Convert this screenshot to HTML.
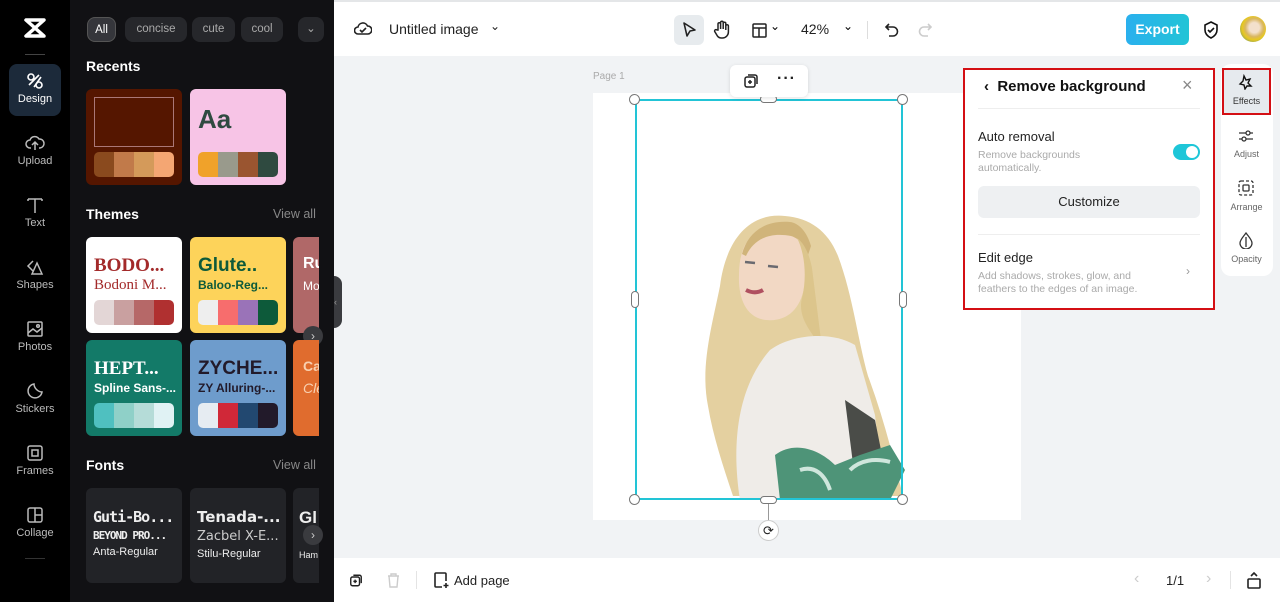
<!DOCTYPE html>
<html><head><meta charset="utf-8">
<style>
*{box-sizing:border-box;margin:0;padding:0}
body{width:1280px;height:602px;overflow:hidden;font-family:"Liberation Sans",sans-serif;background:#f1f3f5;position:relative}
.abs{position:absolute}
#rail{left:0;top:0;width:70px;height:602px;background:#000}
#panel{left:70px;top:0;width:264px;height:602px;background:#111114}
.ri{position:absolute;left:0;width:70px;text-align:center;color:#bbb;font-size:11px}
.ri svg{display:block;margin:0 auto 3px}
.chip{position:absolute;top:17px;height:25px;border-radius:8px;background:#26272b;color:#aaa;font-size:11.5px;line-height:25px;text-align:center}
.h{position:absolute;color:#fff;font-weight:bold;font-size:14px}
.va{position:absolute;color:#888;font-size:12.5px}
.card{position:absolute;width:96px;height:96px;border-radius:6px;overflow:hidden}
.pal{position:absolute;left:8px;right:8px;bottom:8px;height:25px;border-radius:5px;overflow:hidden;display:flex}
.pal i{flex:1}
.fcard{position:absolute;top:488px;width:96px;height:95px;background:#222327;border-radius:6px;color:#eee;padding:20px 7px;white-space:nowrap;overflow:hidden}
#top{left:334px;top:0;width:946px;height:56px;background:#fff;border-top:2px solid #e4e6e8}
#bot{left:334px;top:558px;width:946px;height:44px;background:#fff}
.hd{position:absolute;width:11px;height:11px;border-radius:50%;background:#fff;border:1px solid #777}
</style></head><body>
<div id="rail" class="abs">
  <svg class="abs" style="left:23px;top:17px" width="24" height="22" viewBox="0 0 24 22"><path d="M3 3h18L3 19h18z" stroke="#fff" stroke-width="3.5" fill="none" stroke-linejoin="round"/></svg>
  <div class="abs" style="left:25px;top:54px;width:20px;height:1px;background:#444"></div>
  <div class="abs" style="left:9px;top:64px;width:52px;height:52px;border-radius:8px;background:#1c2a3a"></div>
  <div class="ri" style="top:72px;color:#fff"><svg width="18" height="18" viewBox="0 0 18 18" fill="none" stroke="#fff" stroke-width="1.6"><circle cx="5" cy="5" r="3"/><circle cx="13" cy="13" r="3"/><path d="M8 15l7-10M3 13l10-10"/></svg>Design</div>
  <div class="ri" style="top:134px"><svg width="20" height="18" viewBox="0 0 20 18" fill="none" stroke="#bbb" stroke-width="1.5"><path d="M6 14H5a4 4 0 010-8 5 5 0 019-1 4 4 0 011 9h-1M10 16V8M7 11l3-3 3 3"/></svg>Upload</div>
  <div class="ri" style="top:196px"><svg width="18" height="18" viewBox="0 0 18 18" fill="none" stroke="#bbb" stroke-width="1.5"><path d="M2 3h14M9 3v14M2 3v2M16 3v2"/></svg>Text</div>
  <div class="ri" style="top:258px"><svg width="18" height="18" viewBox="0 0 18 18" fill="none" stroke="#bbb" stroke-width="1.5"><path d="M7 3L2 8l5 5M11 5l5 11H6z"/></svg>Shapes</div>
  <div class="ri" style="top:320px"><svg width="18" height="18" viewBox="0 0 18 18" fill="none" stroke="#bbb" stroke-width="1.5"><rect x="2" y="2" width="14" height="14" rx="1"/><path d="M2 13l5-4 4 3 5-4"/><circle cx="12" cy="6" r="1.3"/></svg>Photos</div>
  <div class="ri" style="top:382px"><svg width="18" height="18" viewBox="0 0 18 18" fill="none" stroke="#bbb" stroke-width="1.5"><path d="M16 10a7 7 0 11-8-8c0 4 4 8 8 8z"/></svg>Stickers</div>
  <div class="ri" style="top:444px"><svg width="18" height="18" viewBox="0 0 18 18" fill="none" stroke="#bbb" stroke-width="1.5"><rect x="2" y="2" width="14" height="14" rx="2"/><rect x="6" y="6" width="6" height="6"/></svg>Frames</div>
  <div class="ri" style="top:506px"><svg width="18" height="18" viewBox="0 0 18 18" fill="none" stroke="#bbb" stroke-width="1.5"><rect x="2" y="2" width="14" height="14" rx="2"/><path d="M9 2v14M9 9h7"/></svg>Collage</div>
  <div class="abs" style="left:25px;top:558px;width:20px;height:1px;background:#333"></div>
</div>
<div id="panel" class="abs">
  <div class="chip" style="left:17px;width:29px;background:#35363b;color:#fff;border:1px solid #555">All</div>
  <div class="chip" style="left:55px;width:62px">concise</div>
  <div class="chip" style="left:122px;width:43px">cute</div>
  <div class="chip" style="left:171px;width:42px">cool</div>
  <div class="chip" style="left:228px;width:26px">⌄</div>
  <div class="h" style="left:16px;top:58px">Recents</div>
  <div class="card" style="left:16px;top:89px;background:#551600"><div class="abs" style="left:8px;top:8px;width:80px;height:50px;border:1px solid #a77"></div><div class="pal"><i style="background:#8a4a1e"></i><i style="background:#c17a4a"></i><i style="background:#d49a5a"></i><i style="background:#f4a673"></i></div></div>
  <div class="card" style="left:120px;top:89px;background:#f7c4e6"><div class="abs" style="left:8px;top:15px;font-size:26px;font-weight:bold;color:#2f4a40">Aa</div><div class="pal"><i style="background:#f0a22a"></i><i style="background:#999a8c"></i><i style="background:#9a5530"></i><i style="background:#2f4a40"></i></div></div>
  <div class="h" style="left:16px;top:206px">Themes</div><div class="va" style="left:203px;top:207px">View all</div>
  <div class="card" style="left:16px;top:237px;background:#fff"><div class="abs" style="left:8px;top:18px;font:bold 19px 'Liberation Serif',serif;color:#a32a2a">BODO...</div><div class="abs" style="left:8px;top:40px;font:15px 'Liberation Serif',serif;color:#a32a2a">Bodoni M...</div><div class="pal"><i style="background:#e3d6d6"></i><i style="background:#c9a0a0"></i><i style="background:#b66868"></i><i style="background:#b03030"></i></div></div>
  <div class="card" style="left:120px;top:237px;background:#fdd35a"><div class="abs" style="left:8px;top:18px;font:bold 19px 'Liberation Sans',sans-serif;color:#0d5a3a">Glute..</div><div class="abs" style="left:8px;top:41px;font:bold 12px sans-serif;color:#0d5a3a">Baloo-Reg...</div><div class="pal"><i style="background:#eee"></i><i style="background:#f76d6d"></i><i style="background:#9a73b8"></i><i style="background:#0d5a3a"></i></div></div>
  <div class="card" style="left:223px;top:237px;width:26px;border-radius:6px 0 0 6px;background:#b06868"><div class="abs" style="left:10px;top:18px;font:bold 16px sans-serif;color:#fff">Ru</div><div class="abs" style="left:10px;top:42px;font:12px sans-serif;color:#fff">Mo</div></div>
  <div class="abs" style="left:233px;top:326px;width:20px;height:20px;border-radius:50%;background:#3a3b3f;color:#ccc;font-size:12px;text-align:center;line-height:20px">›</div>
  <div class="card" style="left:16px;top:340px;background:#137a68"><div class="abs" style="left:8px;top:18px;font:bold 19px 'Liberation Serif',serif;color:#fff">HEPT...</div><div class="abs" style="left:8px;top:41px;font:bold 12px sans-serif;color:#fff">Spline Sans-...</div><div class="pal"><i style="background:#4fc0c0"></i><i style="background:#8fd0c8"></i><i style="background:#b5dcd8"></i><i style="background:#e0f2f4"></i></div></div>
  <div class="card" style="left:120px;top:340px;background:#6e9ccc"><div class="abs" style="left:8px;top:18px;font:bold 19px sans-serif;color:#221a2a">ZYCHE...</div><div class="abs" style="left:8px;top:41px;font:bold 12px sans-serif;color:#221a2a">ZY Alluring-...</div><div class="pal"><i style="background:#e6ecf2"></i><i style="background:#d02838"></i><i style="background:#224870"></i><i style="background:#221a2a"></i></div></div>
  <div class="card" style="left:223px;top:340px;width:26px;border-radius:6px 0 0 6px;background:#e06c2e"><div class="abs" style="left:10px;top:18px;font:bold 14px sans-serif;color:#f8d0b0">Ca</div><div class="abs" style="left:10px;top:40px;font:italic 14px sans-serif;color:#f8d0b0">Cle</div></div>
  <div class="h" style="left:16px;top:457px">Fonts</div><div class="va" style="left:203px;top:458px">View all</div>
  <div class="fcard" style="left:16px"><div style="font:bold 15px 'DejaVu Sans Mono',monospace;letter-spacing:-1px">Guti-Bo...</div><div style="font:bold 11px 'DejaVu Sans Mono',monospace;margin-top:3px;letter-spacing:-1px">BEYOND PRO...</div><div style="font:11px sans-serif;margin-top:4px">Anta-Regular</div></div>
  <div class="fcard" style="left:120px"><div style="font:bold 15px 'DejaVu Sans',sans-serif">Tenada-...</div><div style="font:13px 'DejaVu Sans',sans-serif;margin-top:3px;color:#ccc">Zacbel X-E...</div><div style="font:11px sans-serif;margin-top:4px">Stilu-Regular</div></div>
  <div class="fcard" style="left:223px;width:26px;border-radius:6px 0 0 6px;padding:20px 6px;overflow:hidden"><div style="font:bold 17px sans-serif">Gl</div><div style="font:9px sans-serif;margin-top:22px">Ham</div></div>
  <div class="abs" style="left:233px;top:525px;width:20px;height:20px;border-radius:50%;background:#3a3b3f;color:#ccc;font-size:12px;text-align:center;line-height:20px">›</div>
</div>
<div class="abs" style="left:334px;top:276px;width:8px;height:52px;background:#3a3b3f;border-radius:0 8px 8px 0;color:#999;font-size:9px;line-height:52px">‹</div>

<div id="top" class="abs">
  <svg class="abs" style="left:20px;top:18px" width="18" height="16" viewBox="0 0 18 16" fill="none" stroke="#222" stroke-width="1.6"><path d="M5 14H4a3.5 3.5 0 010-7 5 5 0 019.5-1A3.8 3.8 0 0114 14zM6 10l2 2 4-4"/></svg>
  <div class="abs" style="left:55px;top:19px;font-size:14px;color:#222">Untitled image</div>
  <div class="abs" style="left:156px;top:17px;font-size:12px;color:#222">⌄</div>
  <div class="abs" style="left:340px;top:13px;width:30px;height:30px;border-radius:6px;background:#e7ebee"></div>
  <svg class="abs" style="left:348px;top:20px" width="15" height="16" viewBox="0 0 15 16" fill="none" stroke="#222" stroke-width="1.6"><path d="M2 1l11 7-5 1-3 5z" stroke-linejoin="round"/></svg>
  <svg class="abs" style="left:379px;top:18px" width="18" height="20" viewBox="0 0 18 20" fill="none" stroke="#222" stroke-width="1.5"><path d="M5 10V4a1.3 1.3 0 012.6 0v5V2.5a1.3 1.3 0 012.6 0V9V3.5a1.3 1.3 0 012.6 0V10V6a1.3 1.3 0 012.6 0v6a6 6 0 01-6 6h-1a5 5 0 01-4-2L2 12a1.4 1.4 0 012-2z"/></svg>
  <svg class="abs" style="left:418px;top:21px" width="15" height="15" viewBox="0 0 15 15" fill="none" stroke="#222" stroke-width="1.5"><rect x="1" y="1" width="13" height="13" rx="1"/><path d="M1 5h13M7 5v9"/></svg>
  <div class="abs" style="left:436px;top:17px;font-size:12px">⌄</div>
  <div class="abs" style="left:467px;top:19px;font-size:14px;color:#222">42%</div>
  <div class="abs" style="left:509px;top:17px;font-size:12px">⌄</div>
  <div class="abs" style="left:533px;top:19px;width:1px;height:18px;background:#ddd"></div>
  <svg class="abs" style="left:550px;top:20px" width="16" height="16" viewBox="0 0 16 16" fill="none" stroke="#222" stroke-width="1.6"><path d="M5 2L2 5l3 3M2 5h7a4.5 4.5 0 010 9H5"/></svg>
  <svg class="abs" style="left:583px;top:20px" width="16" height="16" viewBox="0 0 16 16" fill="none" stroke="#ccc" stroke-width="1.6"><path d="M11 2l3 3-3 3M14 5H7a4.5 4.5 0 000 9h4"/></svg>
  <div class="abs" style="left:792px;top:12px;width:63px;height:31px;border-radius:6px;background:linear-gradient(90deg,#2ab0ee,#22c4d6);color:#fff;font-weight:bold;font-size:14px;text-align:center;line-height:31px">Export</div>
  <svg class="abs" style="left:869px;top:19px" width="16" height="18" viewBox="0 0 16 18" fill="none" stroke="#111" stroke-width="1.6"><path d="M8 1l6 3v5c0 4-3 6.5-6 8-3-1.5-6-4-6-8V4z"/><path d="M5 9l2 2 4-4"/></svg>
  <div class="abs" style="left:906px;top:14px;width:26px;height:26px;border-radius:50%;background:radial-gradient(circle at 55% 45%,#f3e0cc 25%,#d9b660 45%,#e8c820 60%,#2a7aa0 100%)"></div>
</div>

<div class="abs" style="left:593px;top:71px;font-size:10px;color:#aaa">Page 1</div>
<div class="abs" style="left:593px;top:93px;width:428px;height:427px;background:#fff"></div>
<svg class="abs" style="left:593px;top:93px" width="428" height="427" viewBox="593 93 428 427">
  <path d="M785 216c-40-4-60 30-65 70-8 40-20 80-12 120 5 30 15 60 25 90h170c-10-40-20-80-35-120-10-35-15-80-30-120-10-25-28-38-53-40z" fill="#e4d0a0"/>
  <path d="M745 245c10-15 40-18 55-5 8 10 8 30 4 48-4 22-18 34-38 32-20-2-28-22-27-45 0-12 2-22 6-30z" fill="#f2d8c4"/>
  <path d="M790 222c-25-2-42 10-48 32l4 2c8-18 25-24 45-20 10 3 15 12 16 22l4-12c-4-14-12-23-21-24z" fill="#d0b47a"/>
  <path d="M797 238c8 15 10 40 5 60-5 20 10 35 20 50l-10-80c-3-15-8-25-15-30z" fill="#dcc58c"/>
  <path d="M770 350c20-15 60-20 85-5l20 70 10 85H740c-8-50-5-110 30-150z" fill="#efece8"/>
  <path d="M845 400l30 20 10 50-30 10z" fill="#4a4c48"/>
  <path d="M775 455c20-15 45-5 60 10l25-10 30-10 15 25-15 30H780z" fill="#4e9478"/>
  <path d="M800 470c15-5 25 5 30 20M850 470c10-10 25-12 40-8" stroke="#cfe6dc" stroke-width="4" fill="none"/>
  <path d="M746 290c6 3 12 3 17 0" stroke="#b05060" stroke-width="4" fill="none"/>
  <path d="M745 262l10 1M768 266l10 1" stroke="#6a6a70" stroke-width="2.5"/>
</svg>
<div class="abs" style="left:635px;top:99px;width:268px;height:401px;border:2px solid #22c4d6"></div>
<div class="hd" style="left:629px;top:94px"></div><div class="hd" style="left:897px;top:94px"></div>
<div class="hd" style="left:629px;top:494px"></div><div class="hd" style="left:897px;top:494px"></div>
<div class="abs" style="left:631px;top:291px;width:8px;height:17px;border-radius:4px;background:#fff;border:1px solid #777"></div>
<div class="abs" style="left:899px;top:291px;width:8px;height:17px;border-radius:4px;background:#fff;border:1px solid #777"></div>
<div class="abs" style="left:760px;top:496px;width:17px;height:8px;border-radius:4px;background:#fff;border:1px solid #777"></div>
<div class="abs" style="left:760px;top:95px;width:17px;height:8px;border-radius:4px;background:#fff;border:1px solid #777"></div>
<div class="abs" style="left:768px;top:504px;width:1px;height:16px;background:#999"></div>
<div class="abs" style="left:758px;top:520px;width:21px;height:21px;border-radius:50%;background:#fff;border:1px solid #ccc;font-size:13px;text-align:center;line-height:19px;color:#222">⟳</div>
<div class="abs" style="left:730px;top:65px;width:78px;height:32px;border-radius:6px;background:#fff;box-shadow:0 1px 4px rgba(0,0,0,.12)"></div>
<svg class="abs" style="left:743px;top:73px" width="16" height="16" viewBox="0 0 16 16" fill="none" stroke="#222" stroke-width="1.5"><rect x="2" y="4" width="10" height="10" rx="2"/><path d="M5 2h7a2 2 0 012 2v7M7 7v4M5 9h4"/></svg>
<div class="abs" style="left:777px;top:70px;font-size:16px;font-weight:bold;color:#222;letter-spacing:1px">···</div>

<div class="abs" style="left:963px;top:68px;width:252px;height:242px;background:#fff;border:2px solid #d40f14"></div>
<div class="abs" style="left:984px;top:78px;font-size:15px;font-weight:bold;color:#111">‹ &nbsp;Remove background</div>
<div class="abs" style="left:1182px;top:75px;font-size:18px;color:#888">×</div>
<div class="abs" style="left:978px;top:108px;width:222px;height:1px;background:#eee"></div>
<div class="abs" style="left:978px;top:129px;font-size:13px;color:#222">Auto removal</div>
<div class="abs" style="left:978px;top:149px;font-size:10.5px;color:#aaa;line-height:13px">Remove backgrounds<br>automatically.</div>
<div class="abs" style="left:1173px;top:144px;width:27px;height:16px;border-radius:8px;background:#1ec6d8"><div class="abs" style="left:13px;top:2px;width:12px;height:12px;border-radius:50%;background:#fff"></div></div>
<div class="abs" style="left:978px;top:186px;width:222px;height:32px;border-radius:6px;background:#eef0f2;text-align:center;line-height:32px;font-size:13px;color:#222">Customize</div>
<div class="abs" style="left:978px;top:234px;width:222px;height:1px;background:#eee"></div>
<div class="abs" style="left:978px;top:250px;font-size:13px;color:#222">Edit edge</div>
<div class="abs" style="left:978px;top:270px;font-size:10.5px;color:#aaa;line-height:13px">Add shadows, strokes, glow, and<br>feathers to the edges of an image.</div>
<div class="abs" style="left:1186px;top:264px;font-size:12px;color:#999">›</div>

<div class="abs" style="left:1221px;top:64px;width:52px;height:212px;border-radius:10px;background:#fff"></div>
<div class="abs" style="left:1222px;top:68px;width:49px;height:47px;background:#e6eaee;border:2px solid #d40f14"></div>
<svg class="abs" style="left:1238px;top:74px" width="16" height="16" viewBox="0 0 16 16" fill="none" stroke="#111" stroke-width="1.4"><path d="M6 2l2 4 4-1-2 4 3 3-4 0-2 3-1-4-4-1 3-3z"/></svg>
<div class="abs" style="left:1222px;top:96px;width:49px;text-align:center;font-size:9px;color:#333">Effects</div>
<svg class="abs" style="left:1238px;top:128px" width="16" height="16" viewBox="0 0 16 16" fill="none" stroke="#333" stroke-width="1.3"><path d="M1 5h14M1 11h14"/><circle cx="10" cy="5" r="2" fill="#fff"/><circle cx="6" cy="11" r="2" fill="#fff"/></svg>
<div class="abs" style="left:1222px;top:149px;width:49px;text-align:center;font-size:9px;color:#666">Adjust</div>
<svg class="abs" style="left:1238px;top:180px" width="16" height="16" viewBox="0 0 16 16" fill="none" stroke="#333" stroke-width="1.3"><rect x="1" y="1" width="14" height="14" rx="2" stroke-dasharray="3 2"/><rect x="5" y="5" width="6" height="6" rx="1"/></svg>
<div class="abs" style="left:1222px;top:202px;width:49px;text-align:center;font-size:9px;color:#666">Arrange</div>
<svg class="abs" style="left:1238px;top:232px" width="16" height="17" viewBox="0 0 16 17" fill="none" stroke="#333" stroke-width="1.3"><path d="M8 1c3 4 6 7 6 10a6 6 0 01-12 0c0-3 3-6 6-10z"/><path d="M8 5v10"/></svg>
<div class="abs" style="left:1222px;top:254px;width:49px;text-align:center;font-size:9px;color:#666">Opacity</div>

<div id="bot" class="abs">
  <svg class="abs" style="left:15px;top:15px" width="14" height="15" viewBox="0 0 16 16" fill="none" stroke="#222" stroke-width="1.6"><rect x="2" y="4" width="10" height="10" rx="2"/><path d="M5 2h7a2 2 0 012 2v7M7 7v4M5 9h4"/></svg>
  <svg class="abs" style="left:53px;top:15px" width="13" height="15" viewBox="0 0 13 15" fill="none" stroke="#ccc" stroke-width="1.4"><path d="M1 3h11M4 3V1h5v2M2 3l1 11h7l1-11"/></svg>
  <div class="abs" style="left:82px;top:13px;width:1px;height:18px;background:#e4e4e4"></div>
  <svg class="abs" style="left:99px;top:14px" width="16" height="17" viewBox="0 0 16 17" fill="none" stroke="#222" stroke-width="1.6"><path d="M9 15H3a1 1 0 01-1-1V2a1 1 0 011-1h9a1 1 0 011 1v7M13 11v5M10.5 13.5h5"/></svg>
  <div class="abs" style="left:120px;top:15px;font-size:13px;color:#222">Add page</div>
  <div class="abs" style="left:800px;top:12px;font-size:16px;color:#ccc">‹</div>
  <div class="abs" style="left:832px;top:15px;font-size:13px;color:#222">1/1</div>
  <div class="abs" style="left:872px;top:12px;font-size:16px;color:#ccc">›</div>
  <div class="abs" style="left:896px;top:13px;width:1px;height:18px;background:#e4e4e4"></div>
  <svg class="abs" style="left:913px;top:13px" width="14" height="18" viewBox="0 0 14 18" fill="none" stroke="#222" stroke-width="1.6"><rect x="1" y="8" width="12" height="9" rx="1"/><path d="M4 5l3-3 3 3"/></svg>
</div>
</body></html>
